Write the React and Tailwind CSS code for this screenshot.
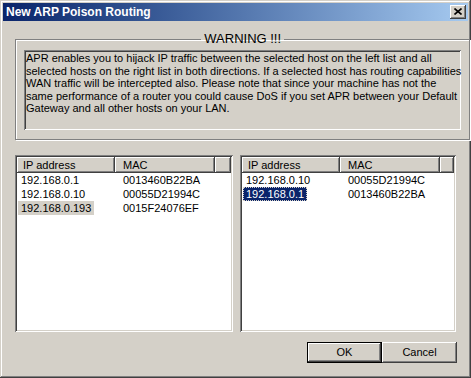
import React from "react";

const raised =
  "shadow-[inset_-1px_-1px_#404040,inset_1px_1px_#ffffff,inset_-2px_-2px_#808080]";
const sunken =
  "shadow-[inset_1px_1px_#808080,inset_-1px_-1px_#ffffff,inset_2px_2px_#404040,inset_-2px_-2px_#d4d0c8]";

const warning = [
  "APR enables you to hijack IP traffic between the selected host on the left list and all",
  "selected hosts on the right list in both directions. If a selected host has routing capabilities",
  "WAN traffic will be intercepted also. Please note that since your machine has not the",
  "same performance of a router you could cause DoS if you set APR between your Default",
  "Gateway and all other hosts on your LAN.",
];

const leftHosts = [
  { ip: "192.168.0.1", mac: "0013460B22BA" },
  { ip: "192.168.0.10", mac: "00055D21994C" },
  { ip: "192.168.0.193", mac: "0015F24076EF", state: "inactive" },
];

const rightHosts = [
  { ip: "192.168.0.10", mac: "00055D21994C" },
  { ip: "192.168.0.1", mac: "0013460B22BA", state: "active" },
];

function HostList({ hosts, className }) {
  return (
    <div className={`h-[177px] bg-white p-[2px] ${sunken} ${className}`}>
      <div className="flex h-[16px] bg-[#d4d0c8] leading-[16px]">
        <div className={`w-[98px] pl-[6px] ${raised}`}>IP address</div>
        <div className={`w-[100px] pl-[8px] ${raised}`}>MAC</div>
        <div className={`flex-1 ${raised}`} />
      </div>
      {hosts.map((h) => (
        <div key={h.ip} className="flex h-[14px] leading-[14px]">
          <div className="w-[98px] pl-px">
            <span
              className={
                h.state === "active"
                  ? "inline-block px-[2px] bg-[#0a246a] text-white border border-dotted border-[#d4d0c8] leading-[12px]"
                  : h.state === "inactive"
                  ? "inline-block px-[3px] bg-[#d4d0c8]"
                  : "inline-block px-[3px]"
              }
            >
              {h.ip}
            </span>
          </div>
          <div className="w-[100px] pl-[8px]">{h.mac}</div>
        </div>
      ))}
    </div>
  );
}

export default function App() {
  return (
    <div className="w-[471px] h-[378px] bg-[#d4d0c8] p-[3px] flex flex-col text-[11px] text-black font-['Liberation_Sans',Arial,sans-serif] shadow-[inset_-1px_-1px_#404040,inset_1px_1px_#d4d0c8,inset_-2px_-2px_#808080,inset_2px_2px_#ffffff]">
      <div className="h-[18px] flex items-center justify-between pl-[3px] pr-[2px] bg-linear-to-r from-[#0a246a] to-[#a6caf0]">
        <span className="text-white font-bold text-[12px] leading-[18px]">
          New ARP Poison Routing
        </span>
        <div className={`w-[16px] h-[14px] bg-[#d4d0c8] flex items-center justify-center ${raised}`}>
          <svg width="8" height="7" viewBox="0 0 8 7" className="-mt-px">
            <path d="M0.5 0.5 L7.5 6.5 M7.5 0.5 L0.5 6.5" stroke="#000" strokeWidth="1.6" />
          </svg>
        </div>
      </div>

      <div className="flex flex-col px-[12px]">
        <fieldset className="mt-[12px] h-[107px] border border-[#808080] shadow-[inset_1px_1px_#ffffff,1px_1px_#ffffff] px-[8px]">
          <legend className="mx-auto px-[3px] leading-[12px] text-[13px]">WARNING !!!</legend>
          <div className={`mt-[5px] h-[80px] pl-[2px] pt-[2px] leading-[12.5px] ${sunken}`}>
            {warning.map((line) => (
              <div key={line} className="whitespace-nowrap">
                {line}
              </div>
            ))}
          </div>
        </fieldset>

        <div className="mt-[15px] flex gap-[7px]">
          <HostList hosts={leftHosts} className="w-[218px]" />
          <HostList hosts={rightHosts} className="flex-1" />
        </div>

        <div className="mt-[10px] flex justify-end -mr-px">
          <button className="w-[75px] h-[21px] bg-[#d4d0c8] border border-black shadow-[inset_-1px_-1px_#404040,inset_1px_1px_#ffffff,inset_-2px_-2px_#808080]">
            OK
          </button>
          <button className={`w-[75px] h-[21px] bg-[#d4d0c8] ${raised}`}>Cancel</button>
        </div>
      </div>
    </div>
  );
}
